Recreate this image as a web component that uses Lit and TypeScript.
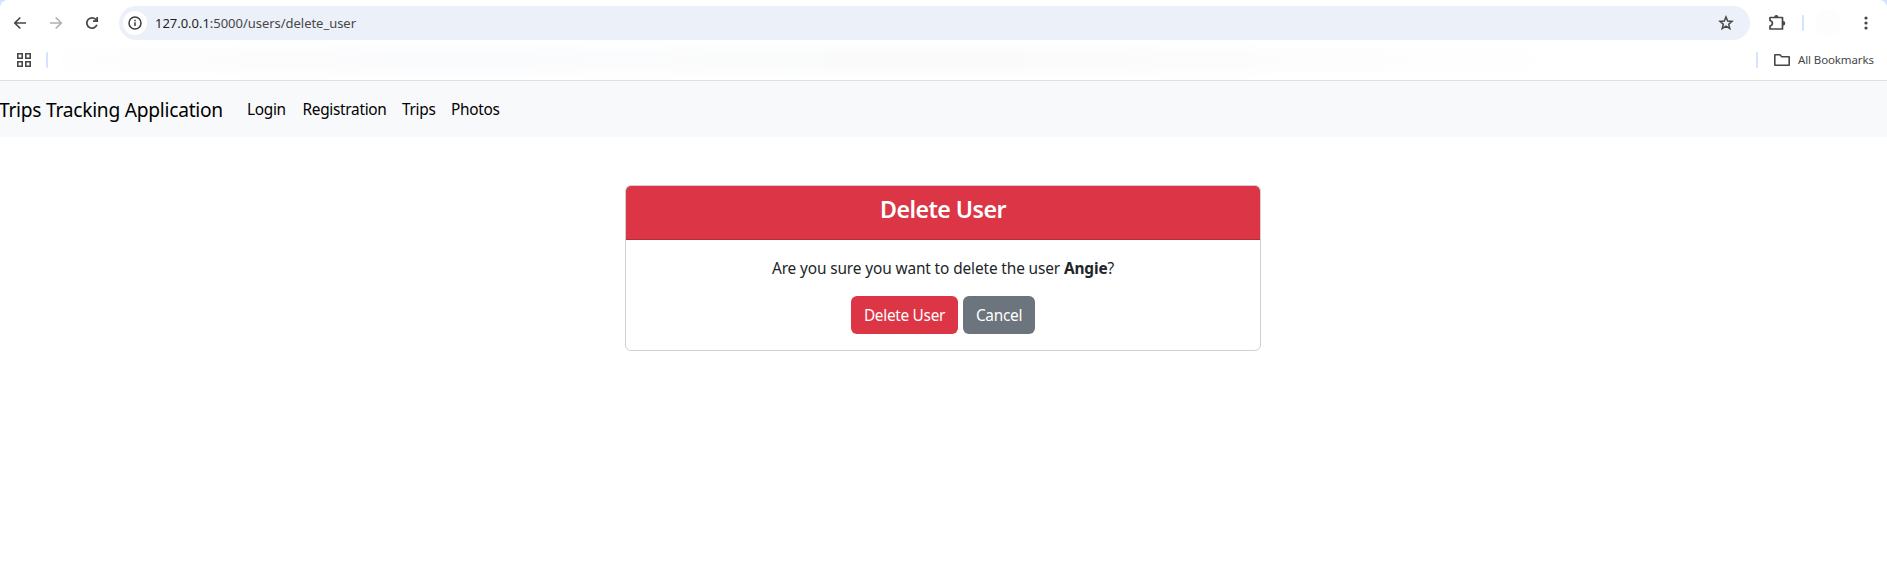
import { LitElement, html, css } from "lit";
import { customElement } from "lit/decorators.js";

@customElement("browser-toolbar")
class BrowserToolbar extends LitElement {
  static styles = css`
    :host { display: block; height: 80px; background: linear-gradient(#d3e3fd, #d3e3fd) 0 0 / 100% 8px no-repeat; border-bottom: 1px solid #dfe1e0; font-family: "Noto Sans", sans-serif; }
    .chrome { height: 80px; background: #fff; border-radius: 8px 8px 0 0; }
    .row { display: flex; align-items: center; }
    .row > * { flex: none; }
    .top { height: 46px; padding-left: 10px; }
    svg { display: block; flex: none; }
    .nav-icon { margin-right: 16px; }
    .reload { margin-right: 17px; }
    .address { display: flex; align-items: center; width: 1631px; height: 34px; border-radius: 17px; background: #ecf0f9; box-sizing: border-box; padding: 0 14px 0 4px; }
    .info { width: 24px; height: 24px; border-radius: 50%; background: #fff; display: grid; place-items: center; margin-right: 8px; }
    .url { flex: 1; font-size: 13px; color: #474747; letter-spacing: -0.03px; white-space: nowrap; }
    .host { color: #1f1f1f; }
    .extensions { margin: 0 15px 0 17px; }
    .sep { width: 2px; height: 16px; background: #d3e3fd; border-radius: 1px; }
    .marks { height: 28px; padding-left: 14px; }
    .apps { margin-right: 12px; }
    .row > .haze { flex: 1; height: 24px; margin: 0 20px 0 14px; background: linear-gradient(90deg, #fefefe, #fcfcfd 14%, #fafbfd 22%, #fbfcfd 34%, #fafafa 52%, #fdfdfd 75%, #fff 90%); filter: blur(4px); }
    .folder { margin: 0 6px 0 14px; }
    .all { font-size: 11.5px; color: #474747; width: 89px; letter-spacing: -0.12px; white-space: nowrap; }
    .avatar { width: 26px; height: 26px; border-radius: 50%; background: #fdfdfd; margin: 0 15px 0 11px; }
  `;
  render() {
    return html`
      <div class="chrome">
        <div class="row top">
          <svg class="nav-icon" width="20" height="20" viewBox="0 0 20 20" fill="none" stroke="#474747" stroke-width="1.7"><path d="M16 10H5M10.300 4.500L4.800 10L10.300 15.500"/></svg>
          <svg class="nav-icon" width="20" height="20" viewBox="0 0 20 20" fill="none" stroke="#b0b0b0" stroke-width="1.7"><path d="M4 10H15M9.700 4.500L15.200 10L9.700 15.500"/></svg>
          <svg class="reload" width="20" height="20" viewBox="0 0 20 20" fill="none" stroke="#474747" stroke-width="1.7"><path d="M14.900 11.800A5.200 5.200 0 1 1 13.800 6.400L15 7.600M15.200 4V8.200H11"/></svg>
          <div class="address">
            <span class="info"><svg width="14" height="14" viewBox="0 0 14 14" fill="none" stroke="#3c3c3c" stroke-width="1.5"><circle cx="7" cy="7" r="6"/><path d="M7 6.300V10M7 3.700V5.200"/></svg></span>
            <span class="url"><span class="host">127.0.0.1</span>:5000/users/delete_user</span>
            <svg width="20" height="20" viewBox="0 0 20 20" fill="none" stroke="#474747" stroke-width="1.5"><path d="M10 4L11.700 8.100L16 8.400L12.700 11.200L13.800 15.600L10 13.200L6.200 15.600L7.300 11.200L4 8.400L8.300 8.100Z"/></svg>
          </div>
          <svg class="extensions" width="20" height="20" viewBox="0 0 20 20" fill="none" stroke="#474747" stroke-width="1.7"><path stroke-linejoin="round" d="M3 4.500H15.500V16H3V13C6.200 12.400 6.200 8.200 3 7.500Z"/><path fill="#474747" stroke="none" d="M7.200 4.200a2.100 2.300 0 0 1 4.200 0zM16 8a2.300 2.200 0 0 1 0 4.400z"/></svg>
          <span class="sep"></span><span class="avatar"></span>
          <svg width="20" height="20" viewBox="0 0 20 20" fill="#474747"><circle cx="10" cy="5" r="1.6"/><circle cx="10" cy="10" r="1.6"/><circle cx="10" cy="15" r="1.6"/></svg>
        </div>
        <div class="row marks">
          <svg class="apps" width="20" height="20" viewBox="0 0 20 20" fill="none" stroke="#474747" stroke-width="1.600"><path d="M3.800 3.800h4.400v4.400h-4.400zM11.800 3.800h4.400v4.400h-4.400zM3.800 11.800h4.400v4.400h-4.400zM11.800 11.800h4.400v4.400h-4.400z"/></svg>
          <span class="sep"></span>
          <span class="haze"></span>
          <span class="sep"></span>
          <svg class="folder" width="20" height="20" viewBox="0 0 20 20" fill="none" stroke="#474747" stroke-width="1.600" stroke-linejoin="round"><path d="M2.800 4.800H7.800L9.800 6.800H17.200V15.200H2.800Z"/></svg>
          <span class="all">All Bookmarks</span>
        </div>
      </div>`;
  }
}

@customElement("app-root")
class AppRoot extends LitElement {
  static styles = css`
    :host { display: block; height: 575px; overflow: hidden; background: #fff; font: 15.4px/24px "Noto Sans", sans-serif; color: #212529; }
    nav { display: flex; height: 56px; box-sizing: border-box; padding-top: 1px; align-items: center; background: #f8f9fb; color: #000; white-space: nowrap; }
    .brand { font-size: 19.2px; letter-spacing: -0.26px; width: 224px; margin-right: 23px; text-indent: -1px; }
    .links { display: grid; grid-template-columns: 55.5px 99.5px 49px auto; letter-spacing: -0.3px; }
    .card { width: 636px; height: 166px; box-sizing: border-box; margin: 48px auto 0 625px; border: 1px solid #d0d1d2; border-radius: 6px; overflow: hidden; text-align: center; }
    h4 { margin: 0; box-sizing: border-box; height: 54px; padding-top: 9px; font-size: 23.2px; line-height: 29px; font-weight: 600; letter-spacing: -0.55px; background: #dc3545; border-bottom: 1px solid #b52c3a; color: #fff; }
    p { margin: 17px 0 15px; letter-spacing: -0.12px; }
    .actions { display: flex; justify-content: center; gap: 5px; }
    button { height: 38px; border: 0; border-radius: 6px; padding: 1px 0 0; color: #fff; font: inherit; letter-spacing: -0.3px; }
    .danger { width: 107px; background: #dc3545; }
    .cancel { width: 72px; background: #6c757d; }
  `;
  render() {
    return html`<browser-toolbar></browser-toolbar>
      <nav>
        <span class="brand">Trips Tracking Application</span>
        <div class="links"><a>Login</a><a>Registration</a><a>Trips</a><a>Photos</a></div>
      </nav>
      <section class="card">
        <h4>Delete User</h4>
        <p>Are you sure you want to delete the user <b>Angie</b>?</p>
        <div class="actions"><button class="danger">Delete User</button><button class="cancel">Cancel</button></div>
      </section>`;
  }
}
